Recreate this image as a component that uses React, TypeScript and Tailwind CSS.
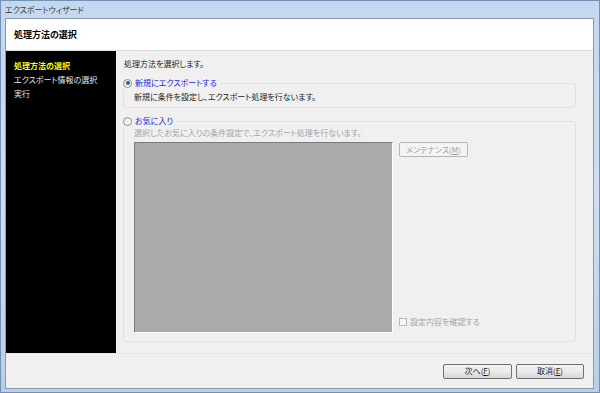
import React from 'react';

const font = "[font-family:'Noto_Sans_CJK_JP',sans-serif] [font-feature-settings:'palt']";

const Radio = ({ checked }: { checked?: boolean }) => (
  <span className="flex h-[9px] w-[9px] items-center justify-center rounded-full border border-[#8f8f8f] bg-gradient-to-br from-[#e6e6e6] to-[#ffffff]">
    {checked && <span className="h-[4px] w-[4px] rounded-full bg-[#2c5f9e]" />}
  </span>
);

const WinButton = ({ label, hotkey, disabled, className = '' }: { label: string; hotkey: string; disabled?: boolean; className?: string }) => (
  <div
    className={`flex h-[15px] items-center justify-center rounded-[2px] border text-[8px] leading-none ${
      disabled
        ? 'border-[#b5b5b5] bg-[#f4f4f4] text-[#a0a0a0]'
        : 'border-[#707070] bg-gradient-to-b from-[#f2f2f2] via-[#ebebeb] to-[#d6d6d6] text-[#1a1a1a]'
    } ${className}`}
  >
    {label}(<span className="underline">{hotkey}</span>)
  </div>
);

const steps = ['処理方法の選択', 'エクスポート情報の選択', '実行'];

export default function App() {
  return (
    <div className={`flex h-[393px] w-[600px] flex-col border border-[#7590b0] bg-gradient-to-b from-[#c3d7ee] via-[#cfdff1] to-[#b8cfe9] ${font}`}>
      {/* title bar */}
      <div className="flex h-[17px] items-center pl-[4px] text-[8px] text-[#3a3a3a]">エクスポートウィザード</div>

      {/* client */}
      <div className="ml-[4px] mr-[5px] flex flex-1 flex-col border border-[#8a9bb0] bg-[#f0f0f0]">
        <div className="flex h-[32px] items-center border-b border-[#dcdcdc] bg-white pl-[8px] text-[9px] font-bold text-black">
          処理方法の選択
        </div>

        <div className="flex h-[302px]">
          <div className="flex w-[110px] flex-col bg-black pl-[8px] pt-[8px] text-[8px] leading-[14px] text-[#e8e8e8]">
            {steps.map((s, i) => (
              <div key={s} className={i === 0 ? 'font-bold text-[#ffff00]' : ''}>
                {s}
              </div>
            ))}
          </div>

          <div className="flex flex-1 flex-col pl-[7px] pr-[17px] pt-[7px] text-[8px] leading-[12px] text-[#1a1a1a]">
            <div className="pl-[1px]">処理方法を選択します。</div>

            {/* new export */}
            <fieldset className="mt-[7px] rounded-[3px] border border-[#dae2ea] pb-[4px] pl-[10px]">
              <legend className="-ml-[11px] flex items-center gap-[3px] pr-[3px] text-[#2323d8]">
                <Radio checked />
                新規にエクスポートする
              </legend>
              <div className="pt-[2px]">新規に条件を設定し、エクスポート処理を行ないます。</div>
            </fieldset>

            {/* favorites */}
            <fieldset className="mt-[7px] rounded-[3px] border border-[#dae2ea] pb-[8px] pl-[10px]">
              <legend className="-ml-[11px] flex items-center gap-[3px] pr-[3px] text-[#2323d8]">
                <Radio />
                お気に入り
              </legend>
              <div className="text-[#a3a3a3]">選択したお気に入りの条件設定で、エクスポート処理を行ないます。</div>
              <div className="mt-[3px] flex h-[191px] gap-[6px]">
                <div className="w-[259px] border border-b-white border-l-[#7a7a7a] border-r-white border-t-[#7a7a7a] bg-[#ababab]" />
                <div className="flex flex-col justify-between pb-[5px]">
                  <WinButton label="メンテナンス" hotkey="M" disabled className="w-[69px]" />
                  <div className="flex items-center gap-[3px] text-[#a3a3a3]">
                    <span className="h-[8px] w-[8px] border border-[#b8b8b8] bg-[#f7f7f7]" />
                    設定内容を確認する
                  </div>
                </div>
              </div>
            </fieldset>
          </div>
        </div>

        <div className="flex flex-1 items-center justify-end gap-[4px] border-t border-[#e6e6e6] pr-[9px]">
          <WinButton label="次へ" hotkey="F" className="w-[69px]" />
          <WinButton label="取消" hotkey="E" className="w-[68px]" />
        </div>
      </div>
      <div className="h-[3px]" />
    </div>
  );
}
